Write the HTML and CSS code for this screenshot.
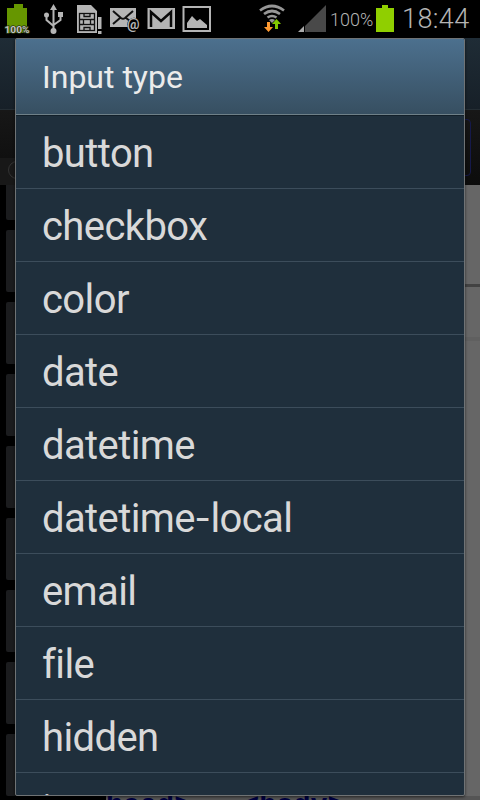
FILE: index.html
```
<!DOCTYPE html>
<html lang="en">
<head>
    <meta charset="UTF-8">
    <meta name="viewport" content="width=device-width, initial-scale=1.0">
    <title>Input type</title>
    <link rel="stylesheet" href="styles.css">
</head>
<body>
    <header class="status-bar">
        <svg class="status-icons" width="330" height="38" viewBox="0 0 330 38">
            <!-- battery -->
            <path fill="#669600" d="M14 4h9v4h4v25H7V8h7z"/>
            <text class="badge" x="4.500" y="32.500" textLength="25" lengthAdjust="spacingAndGlyphs">100%</text>
            <!-- usb -->
            <path fill="none" stroke="#b5b5b5" stroke-width="2" d="M53.500 9v22M46.500 16v4l7 6M60.500 16v4l-7 5"/>
            <path fill="#b5b5b5" d="M53.500 4l3.500 6h-7zM58 12h5v5h-5z"/>
            <circle cx="46.500" cy="15" r="2.500" fill="#b5b5b5"/>
            <circle cx="53.500" cy="31" r="3" fill="#b5b5b5"/>
            <!-- sim card -->
            <path fill="#b5b5b5" d="M77 5h14l6 6v22H77zM98 17h3.500v12H98zM98 31h3.500v3H98z"/>
            <g fill="none" stroke="#111" stroke-width="1.300">
                <rect x="79.500" y="13.500" width="15" height="17"/>
                <rect x="83.500" y="19.500" width="7" height="5"/>
                <path d="M84 13v3.500h6V13M84 31v-3.500h6V31M80 19.500h3M80 24.500h3M91 19.500h3M91 24.500h3"/>
            </g>
            <!-- mail -->
            <path fill="#b5b5b5" d="M110 8h26v19h-26z"/>
            <path fill="none" stroke="#111" stroke-width="2" d="M113 11l8 7q2 1.500 4 0l8-7M113 24l7-6M126 18l4 3"/>
            <circle cx="134" cy="24.500" r="6.800" fill="#000"/>
            <text class="at" x="127" y="28.500" textLength="13">@</text>
            <!-- gmail -->
            <path fill="#b5b5b5" d="M147.500 8H175v21h-27.500z"/>
            <path fill="none" stroke="#080808" stroke-width="2.500" d="M151 27V12l10 9 10-9v15"/>
            <!-- picture -->
            <path fill="none" stroke="#b5b5b5" stroke-width="2" d="M183.500 7H210v24h-26.500z"/>
            <path fill="#b5b5b5" d="M187 28v-5l5-7 5 5 3-2 7 6v3z"/>
            <!-- wifi -->
            <g fill="none" stroke="#969696" stroke-width="2.700">
                <path d="M260 10.500q12-9 24 0M264 14q8-6 16 0M267.500 17.500q4.500-3 9 0"/>
            </g>
            <path fill="#969696" d="M269 20q3-2 6 0l-3 3z"/>
            <path fill="#ff9a32" d="M267 22h3v5h3l-4.500 5-4.500-5h3z"/>
            <path fill="#83c800" d="M275 29h3v-5h3l-4.500-5-4.500 5h3z"/>
            <!-- signal -->
            <path fill="#494949" d="M305 26l21-21v27h-21z"/>
            <path fill="#aaa" d="M298 32l6-6v6z"/>
        </svg>
        <span class="percent">100%</span>
        <svg class="charge" width="18" height="27" viewBox="0 0 18 27"><path fill="#90cf00" d="M6 0h6v3h6v24H0V3h6z"/></svg>
        <time class="clock">18:44</time>
    </header>

    <main class="page">
        <div class="toolbar"></div>
        <div class="tabs">
            <div class="subbar"><span class="radio"></span></div>
            <div class="field"></div>
        </div>
        <div class="columns">
            <div class="cards">
                <div class="card first"></div>
                <div class="card"></div>
                <div class="card"></div>
                <div class="card"></div>
                <div class="card"></div>
                <div class="card"></div>
                <div class="card"></div>
                <div class="card"></div>
                <div class="card"></div>
            </div>
            <div class="preview">
                <div class="rule"></div>
                <div class="rule soft"></div>
            </div>
        </div>
        <div class="bottom">
            <span class="code">head&gt;   &lt;body&gt;</span>
        </div>
    </main>

    <section class="dialog">
        <h1 class="dialog-title">Input type</h1>
        <ul class="options">
            <li>button</li>
            <li>checkbox</li>
            <li>color</li>
            <li>date</li>
            <li>datetime</li>
            <li>datetime<span class="dash">-</span>local</li>
            <li>email</li>
            <li>file</li>
            <li>hidden</li>
            <li>image</li>
        </ul>
    </section>
</body>
</html>
```
FILE: styles.css
```
* {
    margin: 0;
    padding: 0;
    box-sizing: border-box;
}

body {
    width: 480px;
    height: 800px;
    overflow: hidden;
    position: relative;
    background: #000;
    font-family: Roboto, sans-serif;
}

.status-bar {
    display: flex;
    height: 38px;
    background: #000;
    color: #b4b4b4;
}

.status-icons {
    flex: none;
}

.badge {
    font: bold 9.5px Roboto, sans-serif;
    fill: #c4c4c4;
    stroke: #2c3a10;
    stroke-width: 1.5px;
    paint-order: stroke;
}

.at {
    font: bold 14px Roboto, sans-serif;
    fill: #b5b5b5;
}

.percent {
    width: 46px;
    font-size: 18px;
    font-weight: 300;
    line-height: 40px;
    white-space: nowrap;
}

.charge {
    flex: none;
    margin-top: 5px;
}

.clock {
    margin-left: 8px;
    font-size: 27px;
    font-weight: 300;
    letter-spacing: 0.4px;
    line-height: 38px;
}

.page {
    height: 762px;
}

.toolbar {
    height: 72px;
    background: linear-gradient(#1f2c36, #172028);
    border-bottom: 1px solid #242d33;
}

.tabs {
    display: flex;
    height: 75px;
    background: linear-gradient(#171717, #0c0c0c);
}

.subbar {
    align-self: flex-end;
    width: 440px;
    height: 27px;
    padding: 3px 8px;
    background: #181818;
}

.field {
    width: 31px;
    height: 57px;
    margin-top: 9px;
    border: 1px solid #15194a;
    border-radius: 4px;
}

.radio {
    display: block;
    width: 18px;
    height: 18px;
    border: 1px solid #333;
    border-radius: 50%;
}

.columns {
    display: flex;
    height: 611px;
}

.cards {
    display: flex;
    flex-direction: column;
    gap: 10px;
    width: 106px;
    padding-left: 6px;
}

.card {
    flex: none;
    height: 62px;
    background: #1b1c1e;
    border-radius: 2px;
}

.card.first {
    height: 35px;
    border-radius: 0 0 2px 2px;
}

.preview {
    flex: 1;
    padding-top: 99px;
    background: #666;
}

.rule {
    height: 3px;
    margin-bottom: 50px;
    background: #424242;
}

.rule.soft {
    height: 4px;
    background: #606060;
}

.bottom {
    height: 4px;
    margin-left: 106px;
    overflow: hidden;
    background: #555;
}

.code {
    display: block;
    margin-top: -5px;
    font: bold 28.4px/30px "Liberation Mono", monospace;
    color: #000040;
    white-space: pre;
}

.dialog {
    position: absolute;
    top: 38px;
    left: 15px;
    width: 450px;
    height: 758px;
    overflow: hidden;
    background: #1f2f3c;
    border: 1px solid #6f7375;
    border-radius: 2px;
    box-shadow: 0 1px 3px rgba(0, 0, 0, 0.6);
}

.dialog-title {
    height: 76px;
    padding-left: 26px;
    background: linear-gradient(#4c708e, #374f61);
    border-bottom: 1px solid #6f8088;
    color: #ebebeb;
    font-size: 32px;
    font-weight: 400;
    line-height: 77px;
}

.options {
    list-style: none;
    border-top: 1px solid #13202a;
}

.options li {
    height: 73px;
    padding-left: 26px;
    border-bottom: 1px solid #3c4d5b;
    color: #d9d9d9;
    font-size: 40px;
    letter-spacing: -0.6px;
    line-height: 76px;
}

.options li:last-child {
    line-height: 73px;
}

.dash {
    display: inline-block;
    margin: 0 2.5px;
    transform: scaleX(1.2);
}
```
